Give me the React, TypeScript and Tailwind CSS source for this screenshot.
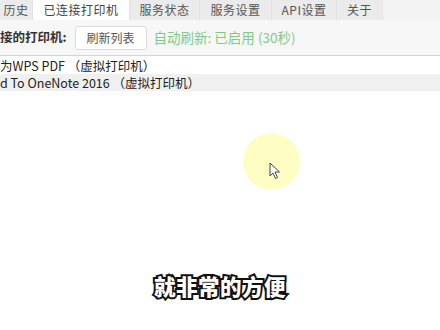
const tabs = [
  { label: "历史", w: "w-[33px]", active: false },
  { label: "已连接打印机", w: "w-[97px]", active: true },
  { label: "服务状态", w: "w-[70px]", active: false },
  { label: "服务设置", w: "w-[72px]", active: false },
  { label: "API设置", w: "w-[65px]", active: false },
  { label: "关于", w: "w-[46px]", active: false },
];

const printers = [
  { name: "为WPS PDF （虚拟打印机）", shaded: false },
  { name: "d To OneNote 2016 （虚拟打印机）", shaded: true },
];

export default function App() {
  return (
    <div className="relative h-[330px] w-[440px] overflow-hidden bg-white font-['Noto_Sans_CJK_SC',sans-serif] text-[#333]">
      {/* Tabs */}
      <div className="flex h-[20px] bg-[#f3f3f3]">
        {tabs.map((t) => (
          <div
            key={t.label}
            className={`${t.w} flex items-center justify-center border-r border-[#e2e2e2] text-[12px] leading-none tracking-[0.5px] ${
              t.active ? "bg-white text-[#444]" : "bg-[#ebebeb] text-[#555]"
            }`}
          >
            {t.label}
          </div>
        ))}
      </div>

      {/* Toolbar */}
      <div className="flex h-[36px] items-center border-b border-[#d6d6d6] bg-[#f7f7f7]">
        <span className="text-[12.5px] font-bold text-[#333]">接的打印机:</span>
        <button className="ml-[8px] h-[24px] w-[72px] rounded-[3px] border border-[#dcdcdc] bg-white text-[12px] text-[#555]">
          刷新列表
        </button>
        <span className="ml-[7px] text-[13.5px] text-[#82ca82]">自动刷新: 已启用 (30秒)</span>
      </div>

      {/* List */}
      <div className="flex flex-col pt-[1px]">
        {printers.map((p) => (
          <div
            key={p.name}
            className={`h-[17px] whitespace-pre text-[12.5px] leading-[17px] text-[#222] ${
              p.shaded ? "bg-[#f0f0f0]" : "bg-white"
            }`}
          >
            {p.name}
          </div>
        ))}
      </div>

      {/* Click highlight */}
      <div className="absolute left-[243px] top-[133px] h-[57px] w-[57px] rounded-full bg-[radial-gradient(circle,#fefdc2_0%,#fefdc4_80%,rgba(255,255,255,0)_100%)]" />
      <svg className="absolute left-[269px] top-[162px]" width="12" height="18" viewBox="0 0 12 18">
        <path
          d="M1 1 L1 14 L4 11 L6.5 16.5 L8.5 15.5 L6 10 L10.5 10 Z"
          fill="#fff"
          stroke="#444"
          strokeWidth="1"
          strokeLinejoin="round"
        />
      </svg>

      {/* Subtitle */}
      <div className="absolute inset-x-0 top-[275px] text-center text-[21.5px] font-black leading-none tracking-[0.5px] text-white [-webkit-text-stroke:4px_#111] [paint-order:stroke_fill]">
        就非常的方便
      </div>
    </div>
  );
}
